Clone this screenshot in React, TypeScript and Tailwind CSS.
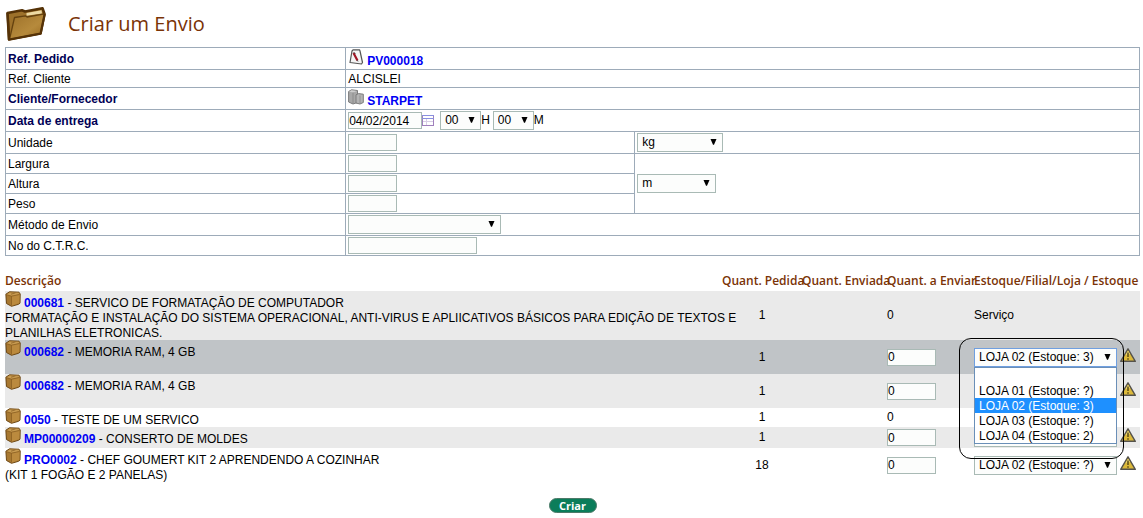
import type { ReactNode } from "react";

const FIELD = "border border-[#a9bab5] bg-[#fcfdfc] text-[12px] leading-[15px] text-black outline-none";
const LINK = "font-bold text-[#0000f5]";

function Arrow() {
  return (
    <svg className="pointer-events-none absolute right-[6px] top-[6px]" width="7" height="6" viewBox="0 0 7 6" aria-hidden="true">
      <path d="M.5 0H6.500L4 5.800H3Z" fill="#000" />
    </svg>
  );
}

function Select({ label, options, value, width, active }: { label: string; options: string[]; value: string; width: string; active?: boolean }) {
  return (
    <span className={`relative inline-block h-[19px] align-top ${width}`}>
      <select
        aria-label={label}
        defaultValue={value}
        className={`block h-[19px] w-full appearance-none border bg-[#fcfdfc] pl-1 text-[12px] leading-[17px] text-black outline-none ${active ? "border-[#6f9fe0]" : "border-[#a9bab5]"}`}
      >
        {options.map((o) => (
          <option key={o} value={o}>{o}</option>
        ))}
      </select>
      <Arrow />
    </span>
  );
}

function FolderIcon() {
  return (
    <svg width="42" height="37" viewBox="0 0 42 37" aria-hidden="true">
      <defs>
        <linearGradient id="flap" x1="0" y1="0" x2="1" y2="1">
          <stop offset="0" stopColor="#9c7029" />
          <stop offset=".6" stopColor="#b68a3c" />
          <stop offset="1" stopColor="#98691f" />
        </linearGradient>
      </defs>
      <path d="M2.500 8 17 5.300 20 6.500 37.500 3.200 39.500 9 35.500 28.500 4 34.500Z" fill="#9d712a" stroke="#553207" strokeWidth="2.600" strokeLinejoin="round" />
      <path d="M21.500 8 36.500 5.300 37 8.500 21.500 10.800Z" fill="#ecd9a4" />
      <path d="M9.500 12.500 20.500 10.800 22 12 39.500 8.800 35.500 28.500 4.500 34.300Z" fill="url(#flap)" stroke="#65420f" strokeWidth="1.300" strokeLinejoin="round" />
      <path d="M39.700 9 35.600 28.500 4 34.500 2.500 8" fill="none" stroke="#553207" strokeWidth="2.200" strokeLinejoin="round" />
    </svg>
  );
}

function BoxIcon() {
  return (
    <svg className="block shrink-0" width="16" height="16" viewBox="0 0 16 16" aria-hidden="true">
      <path d="M.9 3.200 4.500.8 14 1.200 15.200 3 15 12.200 13.500 13.300 6.500 15.300 1.500 12.500Z" fill="#a87830" stroke="#6e4814" strokeLinejoin="round" />
      <path d="M1.500 3.500 4.700 1.400 13.700 1.800 14.500 3.200 6.500 5Z" fill="#c79a50" />
      <path d="M6.500 5 14.600 3.200 14.400 12 6.500 14.700Z" fill="#bb8a3e" />
      <path d="M6.500 5.200V14.500M1.500 3.700 6.500 5.200 14.500 3.500" stroke="#855a20" strokeWidth=".7" fill="none" />
      <path d="M10.500 1.800 6 3.200" stroke="#8d6227" strokeWidth=".8" fill="none" />
    </svg>
  );
}

function OrderIcon() {
  return (
    <svg className="block" width="16" height="16" viewBox="0 0 16 16" aria-hidden="true">
      <path d="M4 2 5 .8H11.500L12 2 14.500 13.500 13.500 15 2 13.500Z" fill="#f4f4f4" stroke="#555" strokeWidth="1.200" strokeLinejoin="round" />
      <path d="M5.500 4 9.500 11.500" stroke="#a01525" strokeWidth="2.200" />
      <path d="M5.500 3.500 7.500 4.500M9 11 10 12.500" stroke="#333" strokeWidth=".8" />
    </svg>
  );
}

function CompanyIcon() {
  return (
    <svg className="block" width="16" height="16" viewBox="0 0 16 16" aria-hidden="true">
      <path d="M.6 2.500 3.500.8 9.500 1.500V13.500L5 15 .6 13Z" fill="#a8a8a8" stroke="#7c7c7c" strokeLinejoin="round" />
      <path d="M1 2.600 3.600 1.300 9 2 5 3.500Z" fill="#cfcfcf" />
      <path d="M5 3.500V14.500" stroke="#858585" strokeWidth=".8" />
      <path d="M8 5.800 10.500 4.600 15.300 5.200V13.500L12 15 8 14Z" fill="#b4b4b4" stroke="#7c7c7c" strokeLinejoin="round" />
      <path d="M12 6.500V14.500" stroke="#8a8a8a" strokeWidth=".8" />
    </svg>
  );
}

function CalendarIcon() {
  return (
    <svg className="block" width="12" height="11" viewBox="0 0 12 11" aria-hidden="true">
      <rect x=".5" y=".5" width="11" height="10" fill="#fff" stroke="#a080bd" />
      <path d="M0 .5H12M0 3.500H12" stroke="#8a90e0" />
      <path d="M1 6.500H11M4.500 4V10" stroke="#d9cfe6" />
    </svg>
  );
}

function WarningIcon() {
  return (
    <svg className="block" width="16" height="15" viewBox="0 0 16 15" role="img" aria-label="Aviso">
      <path d="M8 .8 15.300 13.300H.7Z" fill="#dcb93a" stroke="#55534c" strokeWidth="1.400" strokeLinejoin="round" />
      <path d="M8 2.800 10 6 5.500 7Z" fill="#f0dc7c" />
      <path d="M8 4.500V9M8 10.300V11.800" stroke="#5a4a14" strokeWidth="1.500" />
    </svg>
  );
}

const CELL = "border border-[#9dabb9] px-[2px] py-px";

function Row({ label, htmlFor, bold, children }: { label: string; htmlFor?: string; bold?: boolean; children: ReactNode }) {
  return (
    <tr>
      <th scope="row" className={`border border-[#9dabb9] px-[2px] pt-[2px] text-left ${bold ? "font-bold text-[#000055]" : "font-normal"}`}>
        {htmlFor ? <label htmlFor={htmlFor}>{label}</label> : label}
      </th>
      {children}
    </tr>
  );
}

function TextField({ id, width }: { id: string; width: string }) {
  return <input id={id} type="text" className={`block h-[17px] ${width} ${FIELD}`} />;
}

type Item = { code: string; name: string; lines: string[]; qty: string; place?: string; stock?: string; open?: boolean; bg: string };

const items: Item[] = [
  { code: "000681", name: "SERVICO DE FORMATAÇÃO DE COMPUTADOR", lines: ["FORMATAÇÃO E INSTALAÇÃO DO SISTEMA OPERACIONAL, ANTI-VIRUS E APLIICATIVOS BÁSICOS PARA EDIÇÃO DE TEXTOS E", "PLANILHAS ELETRONICAS."], qty: "1", place: "Serviço", bg: "bg-[#eaeaea]" },
  { code: "000682", name: "MEMORIA RAM, 4 GB", lines: [""], qty: "1", stock: "LOJA 02 (Estoque: 3)", open: true, bg: "bg-[#c0c4c7]" },
  { code: "000682", name: "MEMORIA RAM, 4 GB", lines: [""], qty: "1", stock: "", bg: "bg-[#eaeaea]" },
  { code: "0050", name: "TESTE DE UM SERVICO", lines: [], qty: "1", bg: "bg-white" },
  { code: "MP00000209", name: "CONSERTO DE MOLDES", lines: [], qty: "1", stock: "", bg: "bg-[#eaeaea]" },
  { code: "PRO0002", name: "CHEF GOUMERT KIT 2 APRENDENDO A COZINHAR", lines: ["(KIT 1 FOGÃO E 2 PANELAS)"], qty: "18", stock: "LOJA 02 (Estoque: ?)", bg: "bg-white" },
];

const stores = ["", "LOJA 01 (Estoque: ?)", "LOJA 02 (Estoque: 3)", "LOJA 03 (Estoque: ?)", "LOJA 04 (Estoque: 2)"];

function OpenList() {
  return (
    <>
      <ul className="absolute left-0 top-[19px] z-10 w-[143px] border border-[#6a8fb8] bg-white" role="listbox" aria-label="Lojas">
        {stores.map((s) => (
          <li
            key={s}
            role="option"
            aria-selected={s === "LOJA 02 (Estoque: 3)"}
            className={`h-[15px] pl-1 leading-[16px] ${s === "LOJA 02 (Estoque: 3)" ? "bg-[#1e90ff] text-white" : ""}`}
          >
            {s}
          </li>
        ))}
      </ul>
      <span className="pointer-events-none absolute -left-[15px] -top-[10px] z-20 h-[121px] w-[165px] rounded-[12px] border border-black" />
    </>
  );
}

const HEAD = "whitespace-nowrap text-left align-top font-semibold";

export default function App() {
  return (
    <main className="bg-white pl-[5px] pr-[3px] font-['Liberation_Sans',Arial,sans-serif] text-[12px] leading-[15px] text-black">
      <header className="flex h-[47px] items-center gap-[21px]">
        <FolderIcon />
        <h1 className="font-['Trebuchet_MS','Open_Sans',sans-serif] text-[20px] leading-6 text-[#7a3306]">Criar um Envio</h1>
      </header>

      <table className="w-full table-fixed border-collapse">
        <colgroup>
          <col className="w-[30%]" />
          <col className="w-[25.5%]" />
          <col />
        </colgroup>
        <tbody>
          <Row label="Ref. Pedido" bold>
            <td colSpan={2} className={CELL}>
              <a href="#pedido" className={`flex h-[19px] items-start gap-[3px] ${LINK}`}>
                <OrderIcon />
                <span className="pt-[5px]">PV000018</span>
              </a>
            </td>
          </Row>
          <Row label="Ref. Cliente">
            <td colSpan={2} className="border border-[#9dabb9] px-[2px] pt-[2px]">ALCISLEI</td>
          </Row>
          <Row label="Cliente/Fornecedor" bold>
            <td colSpan={2} className={CELL}>
              <a href="#cliente" className={`flex h-[19px] items-start gap-[3px] ${LINK}`}>
                <CompanyIcon />
                <span className="pt-[5px]">STARPET</span>
              </a>
            </td>
          </Row>
          <Row label="Data de entrega" htmlFor="data" bold>
            <td colSpan={2} className={CELL}>
              <div className="flex items-center">
                <input id="data" type="text" defaultValue="04/02/2014" className={`h-[17px] w-[74px] ${FIELD}`} />
                <button type="button" aria-label="Calendário" className="mr-[6px]"><CalendarIcon /></button>
                <Select label="Hora" options={["00"]} value="00" width="w-[41px]" />
                <span className="mr-[3px] leading-[17px]">H</span>
                <Select label="Minuto" options={["00"]} value="00" width="w-[41px]" />
                <span className="leading-[17px]">M</span>
              </div>
            </td>
          </Row>
          <Row label="Unidade" htmlFor="unidade">
            <td className={CELL}><TextField id="unidade" width="w-[49px]" /></td>
            <td className={CELL}><Select label="Unidade de massa" options={["kg"]} value="kg" width="w-[86px]" /></td>
          </Row>
          <Row label="Largura" htmlFor="largura">
            <td className={CELL}><TextField id="largura" width="w-[49px]" /></td>
            <td rowSpan={3} className={CELL}><Select label="Unidade de medida" options={["m"]} value="m" width="w-[79px]" /></td>
          </Row>
          <Row label="Altura" htmlFor="altura">
            <td className={CELL}><TextField id="altura" width="w-[49px]" /></td>
          </Row>
          <Row label="Peso" htmlFor="peso">
            <td className={CELL}><TextField id="peso" width="w-[49px]" /></td>
          </Row>
          <Row label="Método de Envio">
            <td colSpan={2} className={CELL}><Select label="Método de Envio" options={[""]} value="" width="w-[153px]" /></td>
          </Row>
          <Row label="No do C.T.R.C." htmlFor="ctrc">
            <td colSpan={2} className={CELL}><TextField id="ctrc" width="w-[129px]" /></td>
          </Row>
        </tbody>
      </table>

      <table className="mt-[17px] w-full table-fixed border-collapse">
        <colgroup>
          <col />
          <col className="w-[80px]" />
          <col className="w-[85px]" />
          <col className="w-[87px]" />
          <col className="w-[166px]" />
        </colgroup>
        <thead>
          <tr className="h-[18px] font-['Trebuchet_MS','Open_Sans',sans-serif] text-[12px] text-[#7a3306]">
            <th className={HEAD}>Descrição</th>
            <th className={HEAD}>Quant. Pedida</th>
            <th className={HEAD}>Quant. Enviada</th>
            <th className={HEAD}>Quant. a Enviar</th>
            <th className={HEAD}>Estoque/Filial/Loja / Estoque</th>
          </tr>
        </thead>
        <tbody>
          {items.map((it, i) => (
            <tr key={i} className={it.bg}>
              <td className="align-top">
                <div className="flex h-[19px] items-start gap-[3px]">
                  <BoxIcon />
                  <span className="whitespace-nowrap pt-[5px]">
                    <a href="#produto" className={LINK}>{it.code}</a> - {it.name}
                  </span>
                </div>
                {it.lines.map((l, n) => (
                  <div key={n} className="h-[15px] whitespace-nowrap leading-[17px]">{l}</div>
                ))}
              </td>
              <td className="text-center">{it.qty}</td>
              <td />
              <td>
                {it.stock === undefined ? "0" : (
                  <input type="text" aria-label={`Quantidade a enviar ${it.code}`} defaultValue="0" className={`my-[2px] block h-[17px] w-[49px] ${FIELD}`} />
                )}
              </td>
              <td>
                {it.stock === undefined ? it.place : (
                  <div className="relative flex items-start gap-[3px]">
                    <Select label={`Estoque ${it.code}`} options={[it.stock]} value={it.stock} width="w-[143px]" active={it.open} />
                    <WarningIcon />
                    {it.open && <OpenList />}
                  </div>
                )}
              </td>
            </tr>
          ))}
        </tbody>
      </table>

      <div className="mt-4 flex justify-center">
        <button type="button" className="h-[15px] w-12 rounded-full border border-[#4c7a68] bg-[#0b7d5a] text-center font-['Trebuchet_MS','Open_Sans',sans-serif] text-[11px] font-bold leading-[13px] text-white">
          Criar
        </button>
      </div>
    </main>
  );
}
